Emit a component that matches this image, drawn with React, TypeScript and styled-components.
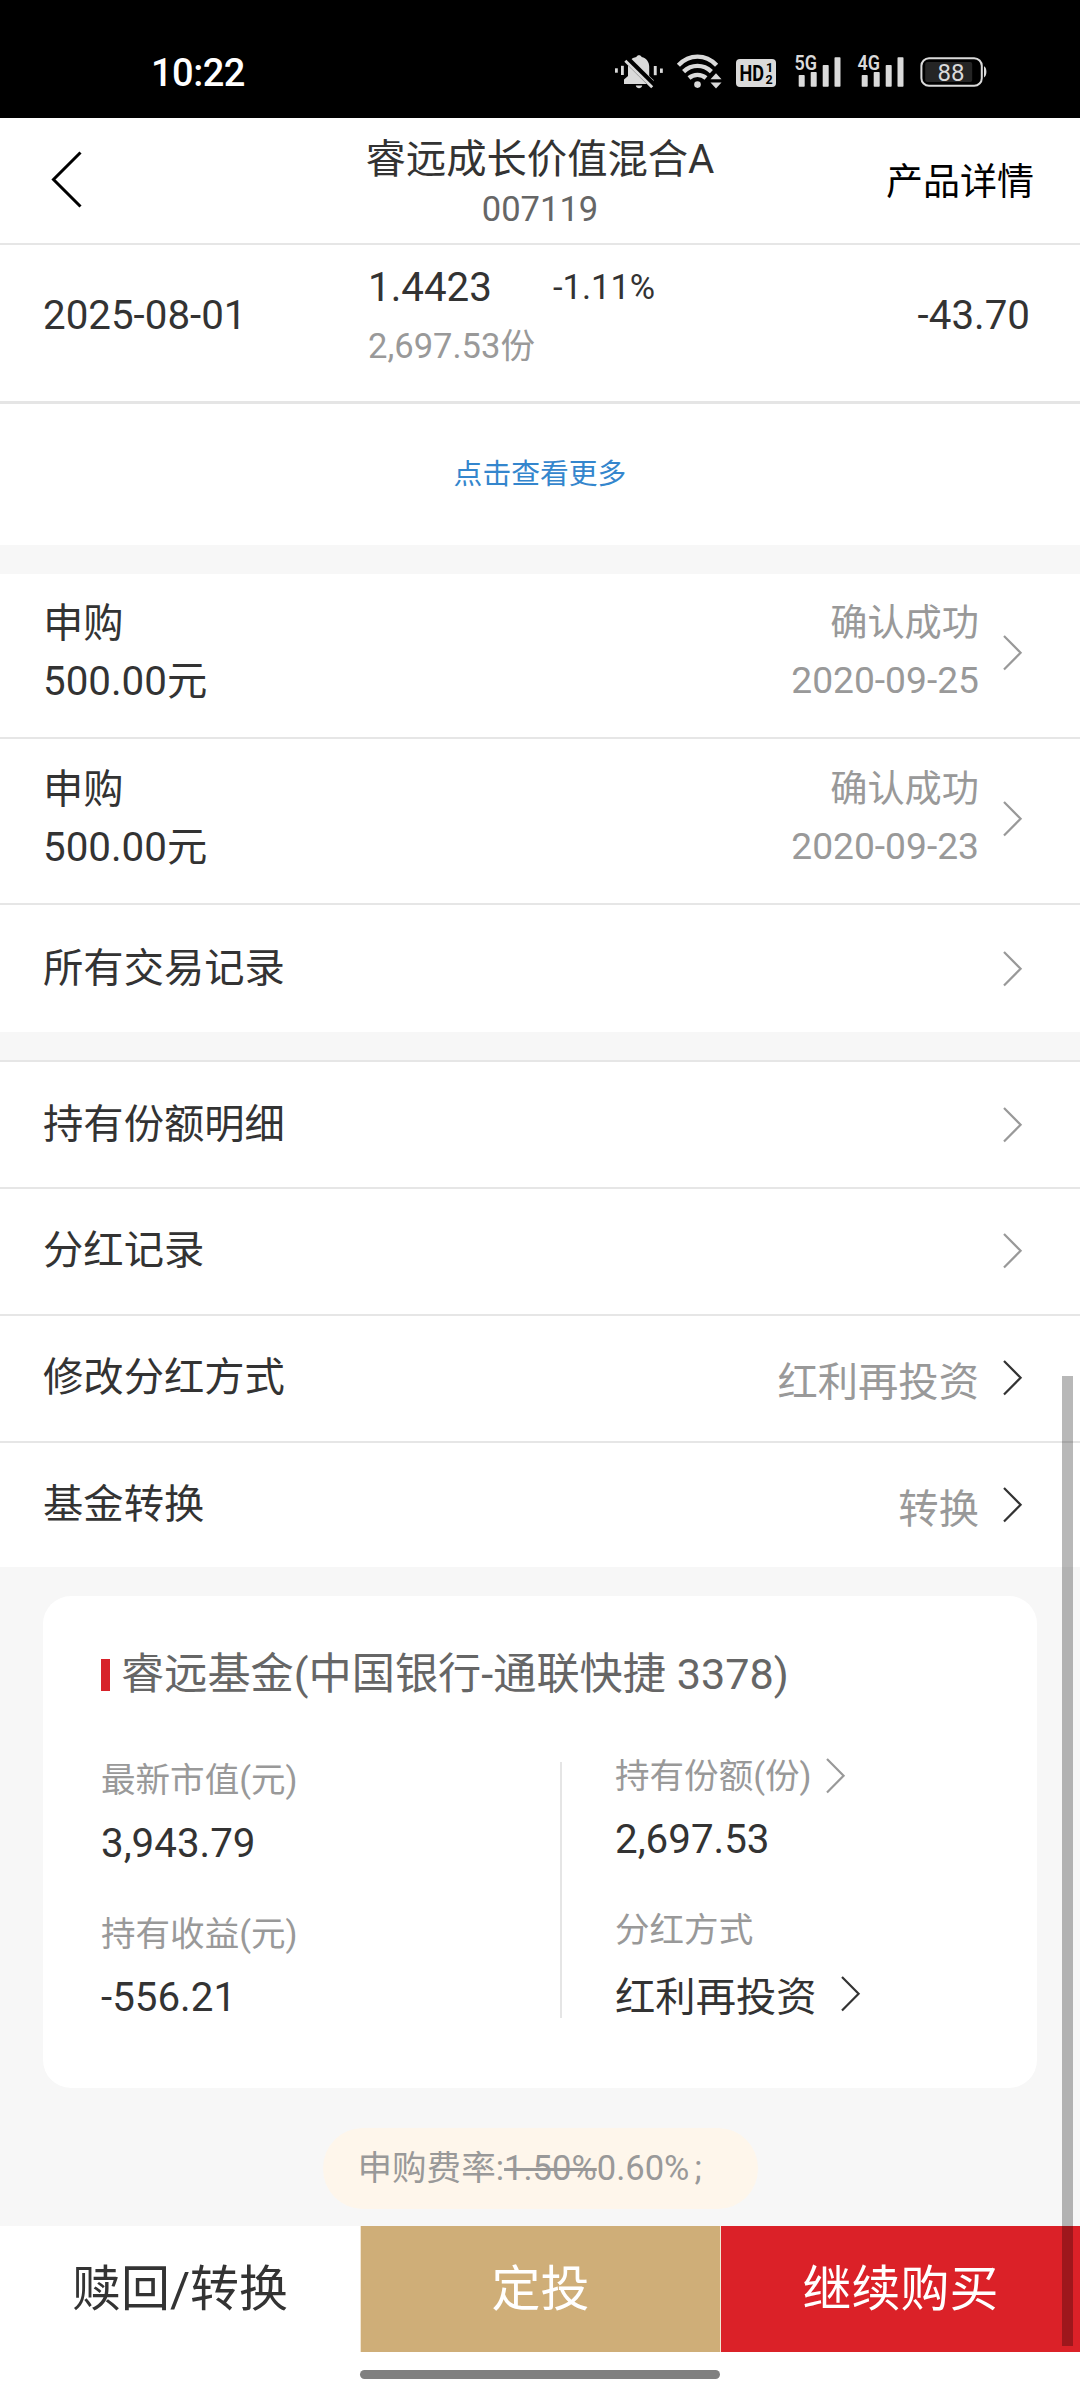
import React from "react";
import styled, { createGlobalStyle } from "styled-components";

const GlobalStyle = createGlobalStyle`
  * { box-sizing: border-box; }
  body {
    margin: 0;
    background: #fff;
    font-family: Roboto, "Noto Sans CJK SC", sans-serif;
    color: #333;
  }
`;

const Screen = styled.main`
  position: relative;
  display: flex;
  flex-direction: column;
  width: 1080px;
  height: 2400px;
  overflow: hidden;
  background: #fff;
`;

const Line = styled.div<{ $size: number; $height: number; $color?: string; $gap?: number }>`
  font-size: ${(p) => p.$size}px;
  line-height: ${(p) => p.$height}px;
  color: ${(p) => p.$color ?? "#333"};
  margin-top: ${(p) => p.$gap ?? 0}px;
  white-space: nowrap;
`;

/* ---------- status bar ---------- */

const StatusBar = styled.header`
  display: flex;
  justify-content: space-between;
  align-items: flex-start;
  height: 118px;
  padding: 0 93px 0 151px;
  background: #000;
`;

const Clock = styled.div`
  padding-top: 49px;
  font-size: 38px;
  line-height: 48px;
  font-weight: 500;
  letter-spacing: -0.5px;
  color: #fff;
`;

const StatusIcons = styled.div`
  display: flex;
  padding-top: 40px;
`;

function StatusGlyphs() {
  const bars = [
    [18.7, 35],
    [30.7, 32],
    [42.7, 25],
    [54.5, 17.3],
  ];
  const Signal = ({ label, x }: { label: string; x: number }) => (
    <g transform={`translate(${x} 0)`} fill="#dadada">
      <text x="14.6" y="30.4" fontSize="21" fontWeight="600" textLength="22.5" lengthAdjust="spacingAndGlyphs" fontFamily="Roboto">
        {label}
      </text>
      {bars.map(([bx, by]) => (
        <rect key={bx} x={bx} y={by} width="6" height={46.7 - by} rx="0.8" />
      ))}
    </g>
  );
  return (
    <svg width="387" height="70" viewBox="0 0 387 70">
      <g fill="#dadada">
        <rect x="15" y="28.3" width="2.8" height="4.4" />
        <rect x="21" y="25.8" width="2.8" height="9.2" />
        <rect x="53.8" y="26" width="2.9" height="9.2" />
        <rect x="60" y="28.5" width="2.8" height="4.4" />
        <path d="M24 44V39.6L28 36V26.5C28 21 31.5 17.8 36.4 16.9C37 14.6 41 14.6 41.6 16.9C46.5 18 49.2 22 49.2 26.5V36L53.6 40V44Z" />
        <path d="M35.8 45.6H42.2C41.6 49.2 36.4 49.2 35.8 45.6Z" />
      </g>
      <path d="M27 19.5L54.5 46.8" stroke="#000" strokeWidth="7" />
      <path d="M25.3 20.8L52.2 47.2" stroke="#dadada" strokeWidth="2.9" />
      <g fill="none" stroke="#dadada" strokeWidth="4.4">
        <path d="M78.4 25.2C89.5 13.8 105.5 13.8 116.6 25.2" />
        <path d="M83.6 31.6C91.5 23.9 103.5 23.9 111.4 31.6" />
        <path d="M89 38C93.8 33.8 101.2 33.8 106 38" />
      </g>
      <g fill="#dadada">
        <circle cx="97.5" cy="44.6" r="3.3" />
        <path d="M110.5 39.3L116 33.3L121.5 39.3Z" />
        <path d="M110.5 42.5L116 48.5L121.5 42.5Z" />
        <rect x="136" y="19" width="40" height="28" rx="4" />
      </g>
      <text x="139.6" y="40.8" fontSize="22" fontWeight="700" textLength="24.5" lengthAdjust="spacingAndGlyphs" fontFamily="Roboto">
        HD
      </text>
      <g fontSize="12.5" fontWeight="700" fontFamily="Roboto">
        <text x="166" y="31.6">1</text>
        <text x="165.6" y="43.6">2</text>
      </g>
      <Signal label="5G" x={180} />
      <Signal label="4G" x={243} />
      <rect x="325.2" y="22" width="47" height="20" rx="2" fill="#252525" />
      <rect x="321.4" y="18.2" width="60.4" height="27.6" rx="7.6" fill="none" stroke="#dadada" strokeWidth="2" />
      <path d="M384 26.3C387.2 27.5 387.2 36.2 384 37.4Z" fill="#dadada" />
      <text x="337.4" y="41.2" fontSize="24.5" fill="#dadada" textLength="27" lengthAdjust="spacingAndGlyphs" fontFamily="Roboto">
        88
      </text>
    </svg>
  );
}

/* ---------- title bar ---------- */

const TitleBar = styled.nav`
  display: grid;
  grid-template-columns: 300px 1fr 300px;
  height: 127px;
  border-bottom: 2px solid #e6e6e6;
`;

const BackButton = styled.div`
  padding: 33px 0 0 50px;
`;

const TitleStack = styled.div`
  padding-top: 16px;
  text-align: center;
`;

const DetailLink = styled.div`
  padding: 45px 46px 0 0;
  text-align: right;
`;

/* ---------- daily profit ---------- */

const DailyRow = styled.section`
  display: grid;
  grid-template-columns: 325px 1fr auto;
  height: 159px;
  padding: 19px 50px 0 43px;
  border-bottom: 3px solid #e5e5e5;
`;

const NavLine = styled.div`
  display: flex;
  align-items: flex-start;
  gap: 61px;
`;

const MoreLink = styled.div`
  display: flex;
  align-items: center;
  justify-content: center;
  height: 141px;
  padding-bottom: 2px;
  font-size: 28.8px;
  line-height: 40px;
  color: #3486cd;
`;

const Divider = styled.div<{ $height: number }>`
  height: ${(p) => p.$height}px;
  background: #f7f7f7;
`;

/* ---------- rows ---------- */

const Row = styled.div<{ $height: number; $ruled?: boolean }>`
  display: flex;
  align-items: center;
  height: ${(p) => p.$height}px;
  padding: 0 57px 0 43px;
  border-top: ${(p) => (p.$ruled ? "2px solid #e6e6e6" : "none")};
  background: #fff;
`;

const RowMain = styled.div<{ $lift?: number }>`
  flex: 1;
  padding-bottom: ${(p) => p.$lift ?? 0}px;
`;

const RowSide = styled.div<{ $lift?: number; $drop?: number }>`
  text-align: right;
  padding-bottom: ${(p) => p.$lift ?? 0}px;
  padding-top: ${(p) => p.$drop ?? 0}px;
  margin-right: 23px;
`;

const ChevronSvg = styled.svg<{ $dark?: boolean }>`
  display: block;
  flex: none;
  fill: none;
  stroke: ${(p) => (p.$dark ? "#333" : "#999")};
  stroke-width: 2.2;
`;

const Chevron = ({ dark }: { dark?: boolean }) => (
  <ChevronSvg $dark={dark} width="21" height="36" viewBox="0 0 21 36">
    <path d="M2 1L18.6 17.7L2 34.5" />
  </ChevronSvg>
);

const ChevronLift = styled.span<{ $by: number }>`
  padding-bottom: ${(p) => p.$by}px;
`;

/* ---------- account card ---------- */

const CardArea = styled.section`
  display: flex;
  flex-direction: column;
  align-items: center;
  height: 659px;
  padding: 29px 43px 0;
  background: #f7f7f7;
`;

const Card = styled.article`
  width: 994px;
  height: 492px;
  padding: 0 58px;
  border-radius: 28px;
  background: #fff;
`;

const CardTitle = styled.div`
  display: flex;
  align-items: center;
  gap: 11px;
  padding-top: 51px;
`;

const RedMark = styled.i`
  width: 9px;
  height: 32px;
  background: #d7222a;
`;

const Figures = styled.div`
  display: grid;
  grid-template-columns: 461px 1fr;
  margin-top: 59px;
`;

const LeftFigures = styled.div`
  height: 256px;
  border-right: 2px solid #e5e5e5;
`;

const FigureStack = styled.div`
  margin-top: -2px;
`;

const RightFigures = styled.div`
  margin-top: -6px;
  padding-left: 53px;
`;

const WithChevron = styled.div<{ $gap: number; $top?: number }>`
  display: flex;
  align-items: center;
  gap: ${(p) => p.$gap}px;
  margin-top: ${(p) => p.$top ?? 0}px;
`;

const FeePill = styled.div`
  width: 435px;
  height: 81px;
  margin-top: 40px;
  padding-left: 35px;
  border-radius: 40px;
  background: #fef6eb;
  font-size: 34.56px;
  line-height: 80px;
  color: #999;
  white-space: nowrap;
`;

const OldRate = styled.s`
  text-decoration-thickness: 3px;
`;

const Semicolon = styled.span`
  margin-left: 5px;
`;

/* ---------- bottom actions ---------- */

const Actions = styled.footer`
  display: grid;
  grid-template-columns: 361px 360px 359px;
  height: 126px;
`;

const Action = styled.div<{ $bg: string; $color: string }>`
  display: flex;
  align-items: center;
  justify-content: center;
  padding-top: 2px;
  border-right: 1px solid #f2e6d2;
  background: ${(p) => p.$bg};
  color: ${(p) => p.$color};
  font-size: 48.96px;
  line-height: 60px;
  &:last-child { border-right: none; }
`;

const HomeIndicator = styled.div`
  width: 360px;
  height: 9px;
  margin: 18px auto 0;
  border-radius: 5px;
  background: #808080;
`;

const ScrollThumb = styled.div`
  position: absolute;
  top: 1376px;
  right: 7px;
  width: 11px;
  height: 970px;
  background: rgba(0, 0, 0, 0.28);
`;

const records = [
  { date: "2020-09-25", height: 163, lift: 6 },
  { date: "2020-09-23", height: 166, lift: 5 },
];

const links = [
  { label: "持有份额明细", height: 127, lift: 0, drop: 0 },
  { label: "分红记录", height: 127, lift: 2, drop: 0 },
  { label: "修改分红方式", value: "红利再投资", height: 127, lift: 2, drop: 8 },
  { label: "基金转换", value: "转换", height: 126, lift: 0, drop: 10 },
];

export default function App() {
  return (
    <>
      <GlobalStyle />
      <Screen>
        <StatusBar>
          <Clock>10:22</Clock>
          <StatusIcons>
            <StatusGlyphs />
          </StatusIcons>
        </StatusBar>

        <TitleBar>
          <BackButton>
            <svg width="34" height="58" viewBox="0 0 34 58" fill="none" stroke="#000" strokeWidth="3">
              <path d="M30.5 1.5L3.5 28.5L30.5 55.5" />
            </svg>
          </BackButton>
          <TitleStack>
            <Line $size={40.32} $height={52}>睿远成长价值混合A</Line>
            <Line $size={34.56} $height={40} $gap={3} $color="#666">007119</Line>
          </TitleStack>
          <DetailLink>
            <Line $size={37} $height={40} $color="#000">产品详情</Line>
          </DetailLink>
        </TitleBar>

        <DailyRow>
          <Line $size={40.32} $height={40} $gap={32}>2025-08-01</Line>
          <div>
            <NavLine>
              <Line $size={40.32} $height={48}>1.4423</Line>
              <Line $size={34.56} $height={46}>-1.11%</Line>
            </NavLine>
            <Line $size={34.56} $height={40} $gap={14} $color="#999">2,697.53份</Line>
          </div>
          <Line $size={40.32} $height={40} $gap={32}>-43.70</Line>
        </DailyRow>

        <MoreLink>点击查看更多</MoreLink>
        <Divider $height={29} />

        {records.map((r, i) => (
          <Row key={r.date} $height={r.height} $ruled={i > 0}>
            <RowMain $lift={r.lift}>
              <Line $size={40.32} $height={48}>申购</Line>
              <Line $size={40.32} $height={48} $gap={10}>500.00元</Line>
            </RowMain>
            <RowSide $lift={r.lift + 3}>
              <Line $size={37.2} $height={48} $color="#999">确认成功</Line>
              <Line $size={37.2} $height={48} $gap={9} $color="#999">{r.date}</Line>
            </RowSide>
            <ChevronLift $by={5}>
              <Chevron />
            </ChevronLift>
          </Row>
        ))}
        <Row $height={129} $ruled>
          <RowMain>
            <Line $size={40.32} $height={48}>所有交易记录</Line>
          </RowMain>
          <Chevron />
        </Row>
        <Divider $height={28} />

        {links.map((l) => (
          <Row key={l.label} $height={l.height} $ruled>
            <RowMain $lift={l.lift}>
              <Line $size={40.32} $height={48}>{l.label}</Line>
            </RowMain>
            {l.value && (
              <RowSide $drop={l.drop}>
                <Line $size={40.32} $height={48} $color="#999">{l.value}</Line>
              </RowSide>
            )}
            <ChevronLift $by={l.lift}>
              <Chevron dark={!!l.value} />
            </ChevronLift>
          </Row>
        ))}

        <CardArea>
          <Card>
            <CardTitle>
              <RedMark />
              <Line $size={43.2} $height={56} $color="#666">睿远基金(中国银行-通联快捷 3378)</Line>
            </CardTitle>
            <Figures>
              <LeftFigures>
                <FigureStack>
                  <Line $size={34.56} $height={40} $color="#999">最新市值(元)</Line>
                  <Line $size={40.32} $height={48} $gap={20}>3,943.79</Line>
                  <Line $size={34.56} $height={40} $gap={46} $color="#999">持有收益(元)</Line>
                  <Line $size={40.32} $height={48} $gap={20}>-556.21</Line>
                </FigureStack>
              </LeftFigures>
              <RightFigures>
                <WithChevron $gap={13}>
                  <Line $size={34.56} $height={40} $color="#999">持有份额(份)</Line>
                  <Chevron />
                </WithChevron>
                <Line $size={40.32} $height={48} $gap={20}>2,697.53</Line>
                <Line $size={34.56} $height={40} $gap={46} $color="#999">分红方式</Line>
                <WithChevron $gap={23} $top={24}>
                  <Line $size={40.32} $height={48}>红利再投资</Line>
                  <ChevronLift $by={9}>
                    <Chevron dark />
                  </ChevronLift>
                </WithChevron>
              </RightFigures>
            </Figures>
          </Card>
          <FeePill>
            申购费率:<OldRate>1.50%</OldRate>0.60%<Semicolon>;</Semicolon>
          </FeePill>
        </CardArea>

        <Actions>
          <Action $bg="#fff" $color="#333">赎回/转换</Action>
          <Action $bg="#cfae78" $color="#fff">定投</Action>
          <Action $bg="#db2128" $color="#fff">继续购买</Action>
        </Actions>
        <HomeIndicator />
        <ScrollThumb />
      </Screen>
    </>
  );
}
